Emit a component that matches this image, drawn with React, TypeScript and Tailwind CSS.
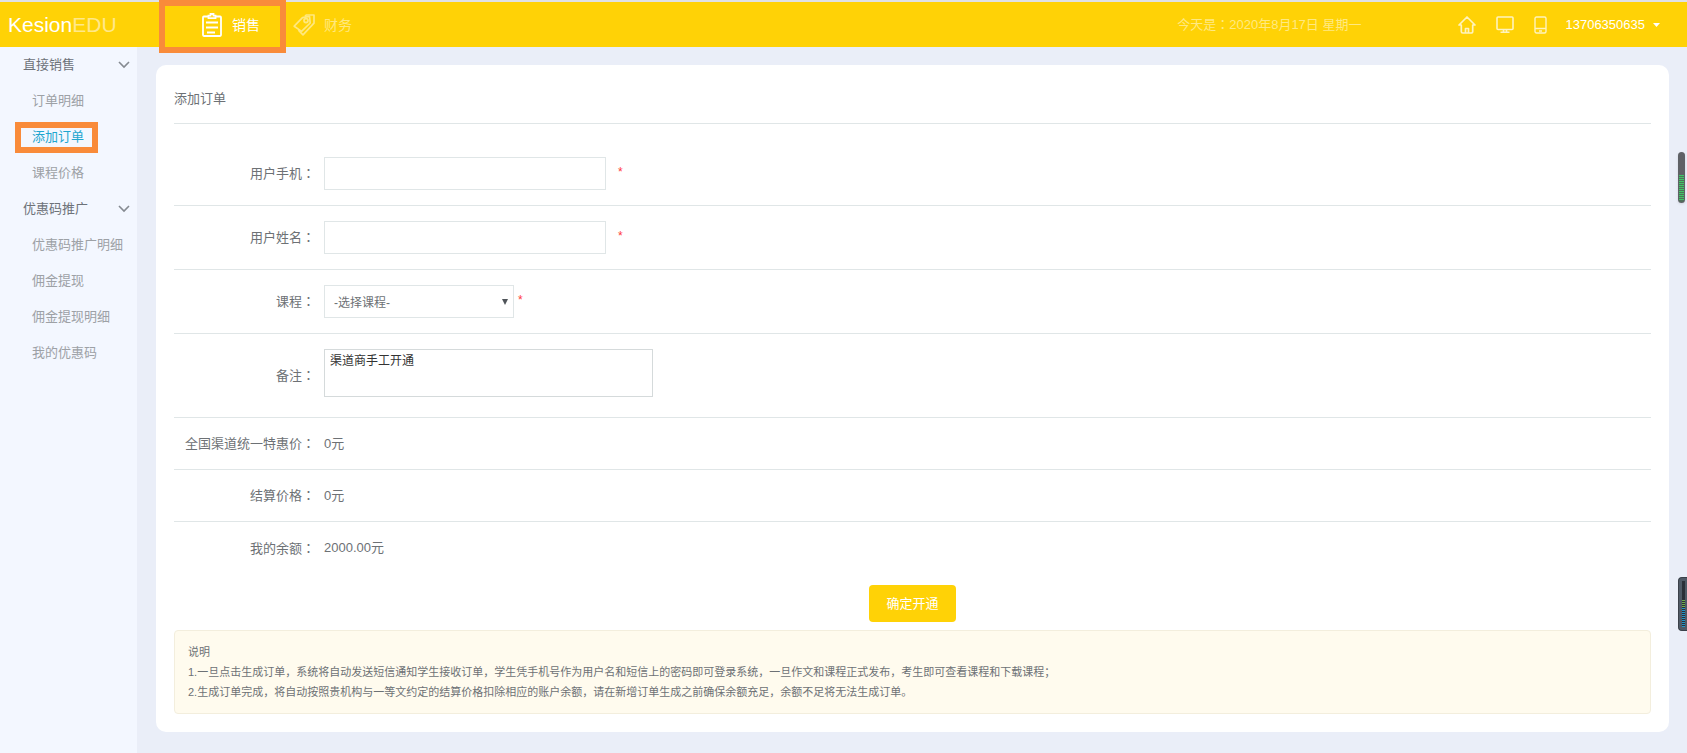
import React from "react";

interface MenuGroup {
  title: string;
  items: string[];
}

const menu: MenuGroup[] = [
  { title: "直接销售", items: ["订单明细", "添加订单", "课程价格"] },
  {
    title: "优惠码推广",
    items: ["优惠码推广明细", "佣金提现", "佣金提现明细", "我的优惠码"],
  },
];

const activeItem = "添加订单";

const ClipboardIcon = () => (
  <svg width="20" height="24" viewBox="0 0 20 24" fill="none" stroke="currentColor" strokeWidth="1.8">
    <path d="M6 3.500H1.900a.9.9 0 0 0-.9.9v17.700c0 .5.400.9.900.9h16.200c.5 0 .9-.4.9-.9V4.400a.9.900 0 0 0-.9-.9H14" />
    <path d="M6.500 2.600h2V1h3v1.600h2v2.600h-7z" />
    <path d="M4 9.500h12M4 14.500h12M5 19.500h8" />
  </svg>
);

const TagIcon = () => (
  <svg width="23" height="22" viewBox="0 0 23 22" fill="none" stroke="currentColor" strokeWidth="1.7" strokeLinejoin="round">
    <path d="M1.200 12.200 9.500 3.600l7-1.300.700 6.700-8.700 8.400z" />
    <path d="M12 2.300 13.200 1H21v8.200L10 20.800l-4.600-4.600" />
    <circle cx="13" cy="6.600" r="2" />
  </svg>
);

const HomeIcon = () => (
  <svg width="18" height="18" viewBox="0 0 18 18" fill="none" stroke="currentColor" strokeWidth="1.7" strokeLinejoin="round">
    <path d="M3.300 9H1l8-8 8 8h-2.300v6.500a1.500 1.500 0 0 1-1.500 1.500H4.800a1.500 1.500 0 0 1-1.500-1.500z" />
    <path d="M7.500 17v-4.500h3V17" />
  </svg>
);

const MonitorIcon = () => (
  <svg width="18" height="18" viewBox="0 0 18 18" fill="none" stroke="currentColor" strokeWidth="1.600">
    <rect x="1" y="1" width="16" height="12.500" rx="1" />
    <path d="M7.500 13.500v2.500M10.500 13.500v2.500M4.500 16.300h9" />
  </svg>
);

const TabletIcon = () => (
  <svg width="13" height="18" viewBox="0 0 13 18" fill="none" stroke="currentColor" strokeWidth="1.400">
    <rect x="1" y="1" width="11" height="16" rx="1.500" />
    <path d="M1 12.500h11M5 15h3" />
  </svg>
);

const Chevron = () => (
  <svg width="12" height="8" viewBox="0 0 12 8" fill="none" stroke="#858a91" strokeWidth="1.600">
    <path d="M1 1l5 5 5-5" />
  </svg>
);

const Header = () => (
  <header className="flex h-[47px] items-center border-t-2 border-[#dfe1e6] bg-[#ffd206] text-white">
    <a href="#" className="w-[159px] shrink-0 pl-2 text-[21px] leading-none">
      Kesion<span className="text-[#ffe88a]">EDU</span>
    </a>
    <nav className="flex h-full text-sm">
      <a href="#" className="relative flex w-[127px] items-center gap-[10px] pl-[43px]">
        <ClipboardIcon />
        销售
        <span className="absolute inset-x-0 -top-[2px] h-[53px] border-6 border-[#f98b3a]" />
      </a>
      <a href="#" className="flex items-center gap-2 pl-[7px] text-[#ffe87f]">
        <TagIcon />
        财务
      </a>
    </nav>
    <div className="ml-auto flex items-center pr-[27px] text-[13px]">
      <span className="mr-[97px] text-[#ffe982]">今天是<Colon />2020年8月17日 星期一</span>
      <div className="mr-[18px] flex items-center gap-5 text-[#fff3bd]">
        <a href="#" aria-label="首页"><HomeIcon /></a>
        <a href="#" aria-label="电脑版"><MonitorIcon /></a>
        <a href="#" aria-label="手机版"><TabletIcon /></a>
      </div>
      <button type="button" className="flex items-center gap-2">
        13706350635
        <svg width="7" height="4" viewBox="0 0 7 4" fill="currentColor">
          <path d="M0 0h7L3.500 4z" />
        </svg>
      </button>
    </div>
  </header>
);

const Sidebar = () => (
  <aside className="w-[137px] shrink-0 bg-[#f3f7ff] text-[13px]">
    {menu.map((group) => (
      <section key={group.title}>
        <button
          type="button"
          className="flex h-9 w-full items-center justify-between pr-[7px] pl-[23px] text-[#6d7279]"
        >
          {group.title}
          <Chevron />
        </button>
        <ul>
          {group.items.map((item) => (
            <li key={item} className="flex h-9 items-center">
              {item === activeItem ? (
                <a
                  href="#"
                  className="ml-[15px] flex h-[31px] w-[83px] items-center border-6 border-[#f98b3a] pl-[11px] whitespace-nowrap text-[#1fa6cf]"
                >
                  {item}
                </a>
              ) : (
                <a href="#" className="pl-8 text-[#9da1a6]">
                  {item}
                </a>
              )}
            </li>
          ))}
        </ul>
      </section>
    ))}
  </aside>
);

// full-width colon drawn in the middle of its box
const Colon = () => <span className="font-['Noto_Sans_CJK_TC',sans-serif]">：</span>;

const Required = () => <span className="pb-1 text-xs text-[#ff3b3b]">*</span>;

interface RowProps {
  label: string;
  htmlFor?: string;
  size?: string;
  children: React.ReactNode;
}

const Row: React.FC<RowProps> = ({ label, htmlFor, size = "h-[52px]", children }) => (
  <div className={`flex items-center border-b border-[#e0e6e7] last:border-b-0 ${size}`}>
    <label htmlFor={htmlFor} className="mr-[9px] w-[141px] shrink-0 text-right whitespace-nowrap">
      {label}
      <Colon />
    </label>
    {children}
  </div>
);

const OrderForm = () => (
  <form>
    <div className="pt-[18px]">
      <Row label="用户手机" htmlFor="mobile" size="h-16">
        <input id="mobile" type="text" className="mr-3 h-[33px] w-[282px] border border-[#e0e6e7] px-2 outline-none" />
        <Required />
      </Row>
      <Row label="用户姓名" htmlFor="name" size="h-16">
        <input id="name" type="text" className="mr-3 h-[33px] w-[282px] border border-[#e0e6e7] px-2 outline-none" />
        <Required />
      </Row>
      <Row label="课程" htmlFor="course" size="h-16">
        <div className="relative mr-1">
          <select
            id="course"
            className="h-[33px] w-[190px] appearance-none border border-[#e0e6e7] bg-white pt-[2px] pl-[9px] text-xs outline-none"
          >
            <option>-选择课程-</option>
          </select>
          <svg
            width="6"
            height="6"
            viewBox="0 0 6 6"
            className="pointer-events-none absolute top-[14px] right-[6px] fill-[#50555a]"
          >
            <path d="M0 0h6L3 6z" />
          </svg>
        </div>
        <Required />
      </Row>
      <Row label="备注" htmlFor="remark" size="h-[84px]">
        <textarea
          id="remark"
          defaultValue="渠道商手工开通"
          className="mb-[6px] h-12 w-[329px] resize-none border border-[#d5dadb] px-[5px] py-px text-xs leading-5 text-[#333] outline-none"
        />
      </Row>
      <Row label="全国渠道统一特惠价">0元</Row>
      <Row label="结算价格">0元</Row>
      <Row label="我的余额">2000.00元</Row>
    </div>
    <div className="pt-[11px] text-center">
      <button type="button" className="h-[37px] w-[87px] rounded-sm bg-[#ffd206] text-[13px] text-white">
        确定开通
      </button>
    </div>
  </form>
);

const Notes = () => (
  <div className="mt-2 rounded border border-[#f3eedd] bg-[#fffbee] px-[13px] py-[11px] text-[11px] leading-5">
    <p>说明</p>
    <p>
      1.一旦点击生成订单，系统将自动发送短信通知学生接收订单，学生凭手机号作为用户名和短信上的密码即可登录系统，一旦作文和课程正式发布，考生即可查看课程和下载课程；
    </p>
    <p>2.生成订单完成，将自动按照贵机构与一等文约定的结算价格扣除相应的账户余额，请在新增订单生成之前确保余额充足，余额不足将无法生成订单。</p>
  </div>
);

const Widgets = () => (
  <>
    <div className="fixed top-[152px] right-[2px] flex h-[51px] w-[7px] flex-col justify-end rounded-full bg-[#5f6166] p-px shadow">
      <svg width="5" height="27" viewBox="0 0 5 27">
        <rect width="5" height="27" rx="2" fill="#50705a" />
        <path d="M2.500 0v25" stroke="#3fc768" strokeWidth="5" strokeDasharray="1 1" />
      </svg>
    </div>
    <div className="fixed top-[577px] right-0 flex h-[54px] w-[9px] justify-center rounded-l-sm border border-r-0 border-[#3a4049] bg-[#505a66] pt-[3px]">
      <svg width="3" height="46" viewBox="0 0 3 46">
        <rect width="3" height="46" fill="#2c3038" />
        <path d="M1.500 19v8" stroke="#6fae4a" strokeWidth="3" strokeDasharray="1 1" />
        <path d="M1.500 27v19" stroke="#2196c9" strokeWidth="3" strokeDasharray="1 1" />
      </svg>
    </div>
  </>
);

const App = () => {
  return (
    <div className="flex min-h-screen flex-col bg-[#eaeef8] font-['Liberation_Sans','Noto_Sans_CJK_SC',sans-serif] text-[13px] text-[#6d7175]">
      <Header />
      <div className="flex grow">
        <Sidebar />
        <main className="grow pt-[18px] pr-[18px] pb-[22px] pl-[19px]">
          <div className="rounded-[10px] bg-white px-[18px] pb-[18px]">
            <h1 className="flex h-[59px] items-center border-b border-[#e0e6e7] pt-[10px]">添加订单</h1>
            <OrderForm />
            <Notes />
          </div>
        </main>
      </div>
      <Widgets />
    </div>
  );
};

export default App;
